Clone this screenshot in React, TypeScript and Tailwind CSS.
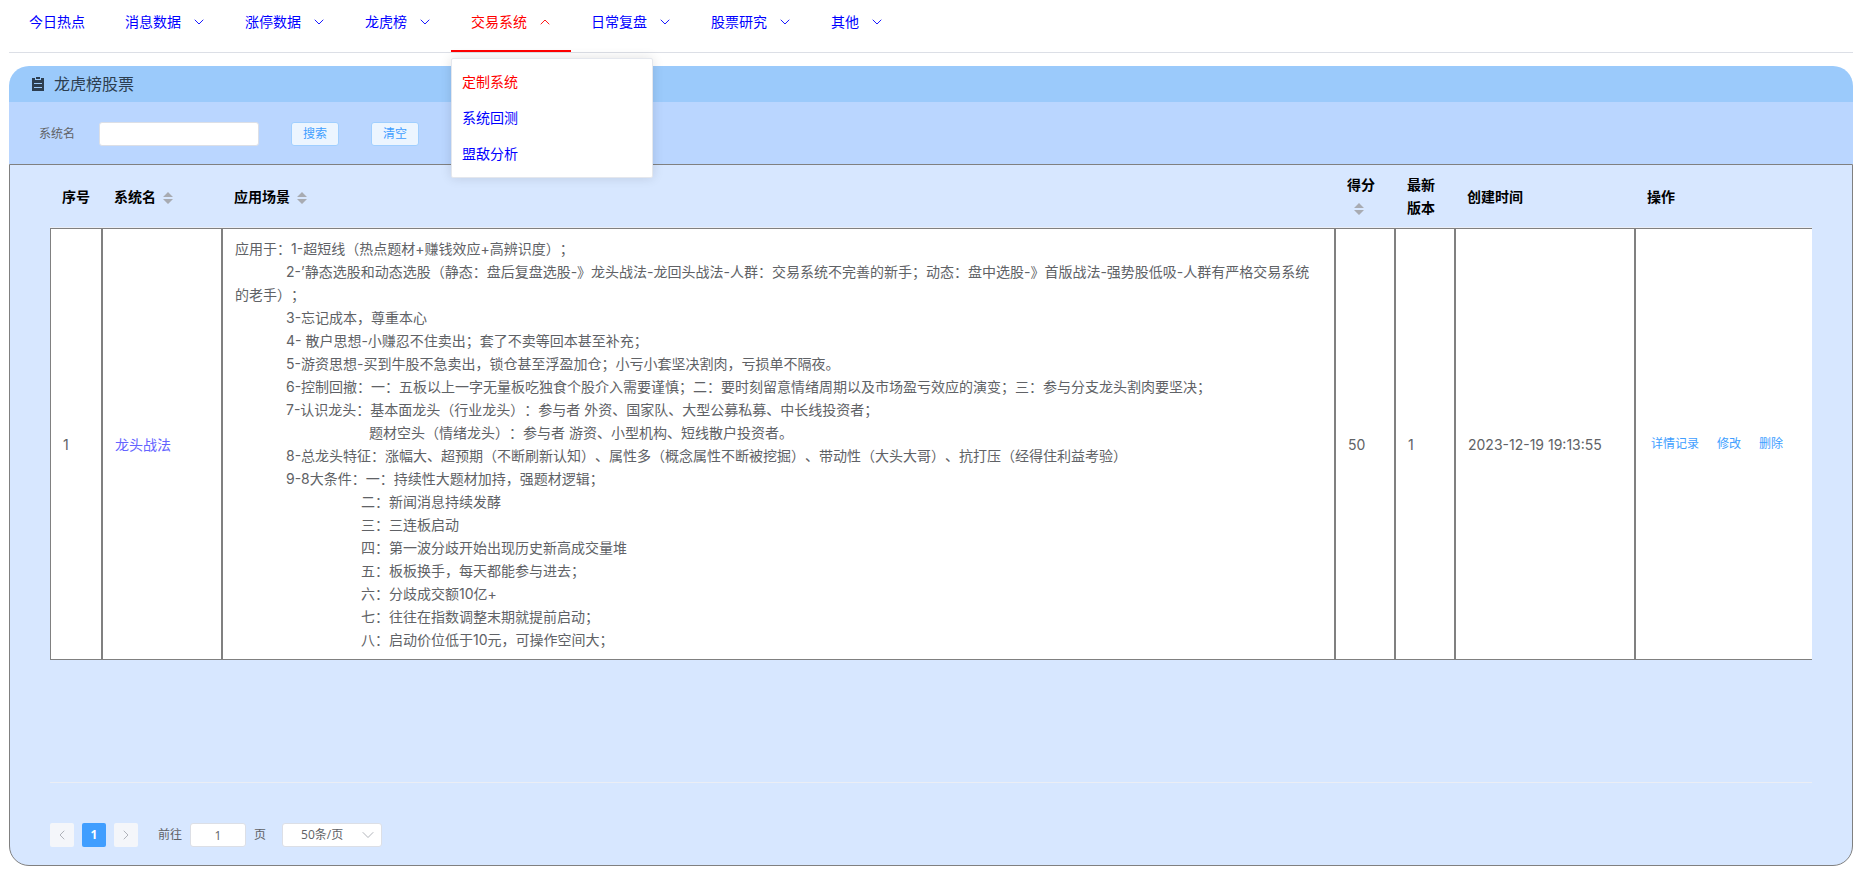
import React from 'react';

interface NavItem {
    label: string;
    hasChildren: boolean;
    active?: boolean;
}

const NAV_ITEMS: NavItem[] = [
    { label: '今日热点', hasChildren: false },
    { label: '消息数据', hasChildren: true },
    { label: '涨停数据', hasChildren: true },
    { label: '龙虎榜', hasChildren: true },
    { label: '交易系统', hasChildren: true, active: true },
    { label: '日常复盘', hasChildren: true },
    { label: '股票研究', hasChildren: true },
    { label: '其他', hasChildren: true },
];

const SUB_ITEMS = ['定制系统', '系统回测', '盟敌分析'];

const SCENE_LINES: { indent: string; text: string }[] = [
    { indent: 'indent-0', text: '应用于：1-超短线（热点题材+赚钱效应+高辨识度）；' },
    { indent: 'indent-[51px]', text: '2-’静态选股和动态选股（静态：盘后复盘选股-》龙头战法-龙回头战法-人群：交易系统不完善的新手；动态：盘中选股-》首版战法-强势股低吸-人群有严格交易系统的老手）；' },
    { indent: 'indent-[51px]', text: '3-忘记成本，尊重本心' },
    { indent: 'indent-[51px]', text: '4- 散户思想-小赚忍不住卖出；套了不卖等回本甚至补充；' },
    { indent: 'indent-[51px]', text: '5-游资思想-买到牛股不急卖出，锁仓甚至浮盈加仓；小亏小套坚决割肉，亏损单不隔夜。' },
    { indent: 'indent-[51px]', text: '6-控制回撤：一：五板以上一字无量板吃独食个股介入需要谨慎；二：要时刻留意情绪周期以及市场盈亏效应的演变；三：参与分支龙头割肉要坚决；' },
    { indent: 'indent-[51px]', text: '7-认识龙头：基本面龙头（行业龙头）：参与者 外资、国家队、大型公募私募、中长线投资者；' },
    { indent: 'indent-[134px]', text: '题材空头（情绪龙头）：参与者 游资、小型机构、短线散户投资者。' },
    { indent: 'indent-[51px]', text: '8-总龙头特征：涨幅大、超预期（不断刷新认知）、属性多（概念属性不断被挖掘）、带动性（大头大哥）、抗打压（经得住利益考验）' },
    { indent: 'indent-[51px]', text: '9-8大条件：一：持续性大题材加持，强题材逻辑；' },
    { indent: 'indent-[126px]', text: '二：新闻消息持续发酵' },
    { indent: 'indent-[126px]', text: '三：三连板启动' },
    { indent: 'indent-[126px]', text: '四：第一波分歧开始出现历史新高成交量堆' },
    { indent: 'indent-[126px]', text: '五：板板换手，每天都能参与进去；' },
    { indent: 'indent-[126px]', text: '六：分歧成交额10亿+' },
    { indent: 'indent-[126px]', text: '七：往往在指数调整末期就提前启动；' },
    { indent: 'indent-[126px]', text: '八：启动价位低于10元，可操作空间大；' },
];

const ArrowIcon: React.FC<{ className: string; d?: string }> = ({ className, d = 'M2 4l4 4 4-4' }) => (
    <svg className={className} viewBox="0 0 12 12" fill="none" stroke="currentColor" aria-hidden="true">
        <path d={d} strokeWidth="0.9" strokeLinecap="round" strokeLinejoin="round" />
    </svg>
);

const SortIcon: React.FC = () => (
    <button type="button" aria-label="排序" className="inline-flex h-[14px] w-6 items-center justify-center align-middle">
        <svg className="h-3 w-[10px] text-[#a8abb2]" viewBox="0 0 10 12" fill="currentColor">
            <path d="M5 0l5 5H0zM5 12l5-5H0z" />
        </svg>
    </button>
);

const Navbar: React.FC = () => (
    <nav className="flex border-b border-[#dcdfe6] text-sm text-[#0000ff]">
        {NAV_ITEMS.map((item) => (
            <div key={item.label} className="relative">
                <a
                    href="#"
                    className={`flex h-[52px] items-center gap-3 border-b-2 px-5 pb-1.5 ${item.active ? 'border-[#ff0000] text-[#ff0000]' : 'border-transparent'}`}
                >
                    {item.label}
                    {item.hasChildren && (
                        <ArrowIcon className={`h-3 w-3 ${item.active ? 'rotate-180' : ''}`} />
                    )}
                </a>
                {item.active && (
                    <ul className="absolute left-0 top-[58px] z-10 w-[202px] rounded-xs border border-[#e4e7ed] bg-white py-[5px] shadow-[0_0_12px_rgba(0,0,0,0.12)]">
                        {SUB_ITEMS.map((label, i) => (
                            <li key={label}>
                                <a href="#" className={`flex h-9 items-center px-[10px] ${i === 0 ? 'text-[#ff0000]' : ''}`}>
                                    {label}
                                </a>
                            </li>
                        ))}
                    </ul>
                )}
            </div>
        ))}
    </nav>
);

const SearchBar: React.FC = () => {
    const buttonClass = 'h-6 w-12 rounded-[3px] border border-[#a0cfff] bg-[#ecf5ff] text-xs text-[#409eff]';
    return (
        <form className="flex h-[62px] items-center bg-[#bad6ff] pl-[30px] pt-0.5 text-xs text-[#606266]">
            <label htmlFor="system-name" className="mr-6">系统名</label>
            <input id="system-name" type="text" className="h-6 w-40 rounded-[3px] border border-[#dcdfe6] bg-white px-2 outline-none" />
            <div className="ml-8 flex gap-8">
                <button type="button" className={buttonClass}>搜索</button>
                <button type="button" className={buttonClass}>清空</button>
            </div>
        </form>
    );
};

const SystemTable: React.FC = () => {
    const th = 'border-b border-[#ebeef5] px-3 py-2 text-left font-bold';
    const td = 'border border-[#808080] bg-white px-3 py-2';
    return (
        <table className="w-full table-fixed border-separate border-spacing-0 text-sm leading-[23px]">
            <colgroup>
                <col className="w-[52px]" />
                <col className="w-[120px]" />
                <col />
                <col className="w-[60px]" />
                <col className="w-[60px]" />
                <col className="w-[180px]" />
                <col className="w-[177px]" />
            </colgroup>
            <thead className="text-black">
                <tr>
                    <th className={th}>序号</th>
                    <th className={th}>系统名<SortIcon /></th>
                    <th className={th}>应用场景<SortIcon /></th>
                    <th className={th}>得分<SortIcon /></th>
                    <th className={th}>最新版本</th>
                    <th className={th}>创建时间</th>
                    <th className={th}>操作</th>
                </tr>
            </thead>
            <tbody className="text-[#606266]">
                <tr>
                    <td className={td}>1</td>
                    <td className={td}>
                        <a href="#" className="text-[#6464ff]">龙头战法</a>
                    </td>
                    <td className={td}>
                        {SCENE_LINES.map((line) => (
                            <p key={line.text} className={line.indent}>{line.text}</p>
                        ))}
                    </td>
                    <td className={td}>50</td>
                    <td className={td}>1</td>
                    <td className={td}>2023-12-19 19:13:55</td>
                    <td className="border-y border-l border-[#808080] bg-white px-3 py-2">
                        <div className="flex gap-3 text-xs leading-6 text-[#409eff]">
                            <button type="button" className="px-[3px]">详情记录</button>
                            <button type="button" className="px-[3px]">修改</button>
                            <button type="button" className="px-[3px]">删除</button>
                        </div>
                    </td>
                </tr>
            </tbody>
        </table>
    );
};

const Pagination: React.FC = () => (
    <div className="flex items-center pb-[18px] pt-10 font-['Open_Sans','Noto_Sans_CJK_SC',sans-serif] text-xs text-[#606266]">
        <div className="flex gap-2">
            <button type="button" aria-label="上一页" className="flex h-6 w-6 items-center justify-center rounded-xs bg-[#f4f6fa] text-[#a8abb2]">
                <ArrowIcon className="h-3 w-3" d="M8 2 4 6l4 4" />
            </button>
            <button type="button" className="h-6 w-6 rounded-xs bg-[#409eff] font-bold text-white">1</button>
            <button type="button" aria-label="下一页" className="flex h-6 w-6 items-center justify-center rounded-xs bg-[#f4f6fa] text-[#a8abb2]">
                <ArrowIcon className="h-3 w-3" d="M4 2l4 4-4 4" />
            </button>
        </div>
        <label htmlFor="goto-page" className="ml-5">前往</label>
        <input id="goto-page" type="text" defaultValue="1" className="mx-2 h-6 w-14 rounded-[3px] border border-[#dcdfe6] bg-white text-center outline-none" />
        <span>页</span>
        <div className="relative ml-4">
            <select aria-label="每页条数" className="h-6 w-[100px] appearance-none rounded-[3px] border border-[#dcdfe6] bg-white pl-[18px] outline-none">
                <option>50条/页</option>
            </select>
            <ArrowIcon className="pointer-events-none absolute right-2 top-1.5 h-3 w-3 text-[#a8abb2]" d="M1 3.5l5 5 5-5" />
        </div>
    </div>
);

export default function App() {
    return (
        <div className="bg-white pl-[9px] pr-[7px] font-['Inter','Noto_Sans_CJK_SC',sans-serif] [text-spacing-trim:space-all]">
            <Navbar />
            <main className="mt-[13px]">
                <header className="flex h-9 items-center gap-[10px] rounded-t-[20px] bg-[#9bcafb] pl-[23px] text-[#2c3e50]">
                    <svg className="h-[14px] w-3" viewBox="0 0 12 14" aria-hidden="true">
                        <path fill="currentColor" d="M0 1h3v2h6V1h3v13H0z" />
                        <path fill="currentColor" d="M4 0h4v2H4z" />
                        <path stroke="#9bcafb" d="M2 6.500h8M2 10.500h8" />
                    </svg>
                    <h1 className="text-base leading-6">龙虎榜股票</h1>
                </header>
                <SearchBar />
                <section className="rounded-b-[20px] border border-[#808080] bg-[#d7e7ff] px-10">
                    <div className="min-h-[618px] border-b border-[#ebeef5]">
                        <SystemTable />
                    </div>
                    <Pagination />
                </section>
            </main>
        </div>
    );
}
